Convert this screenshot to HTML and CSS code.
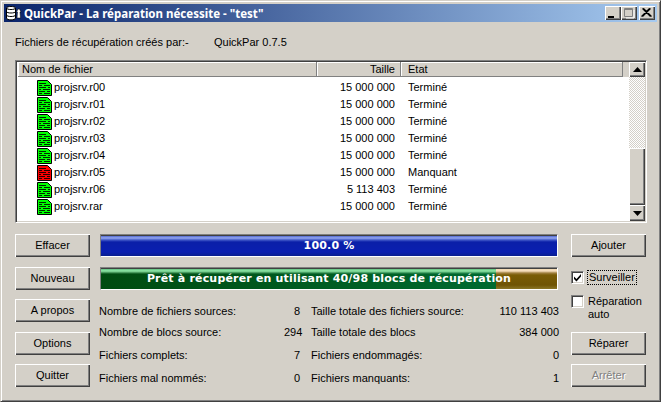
FILE: index.html
```html
<!DOCTYPE html>
<html lang="fr">
<head>
<meta charset="utf-8">
<title>QuickPar</title>
<link rel="stylesheet" href="styles.css">
</head>
<body>
<svg class="defs" width="0" height="0" aria-hidden="true">
  <symbol id="file" viewBox="0 0 16 16">
    <path d="M.5 .5H10.5L14.500 4.500V15.500H.5Z" fill="currentColor" stroke="#000"/>
    <path d="M2 3.500H9M2 5.500H5M7 5.500H13M2 7.500H9M11 7.500H13M2 9.500H4M6 9.500H13M2 11.500H8M10 11.500H13M2 13.500H5M7 13.500H13" fill="none" stroke="#000" stroke-opacity=".85"/>
  </symbol>
</svg>
<div class="window">
  <header class="titlebar">
    <svg class="appicon" width="18" height="16" viewBox="0 0 18 16">
      <path d="M1.500 3C1.500 1 10.500 1 10.500 3V13C10.500 15.500 1.500 15.500 1.500 13Z" fill="#fff" stroke="#000"/>
      <path d="M1.500 3C1.500 5 10.500 5 10.500 3M1.500 6.500C1.500 8.500 10.500 8.500 10.500 6.500M1.500 10C1.500 12 10.500 12 10.500 10" fill="none" stroke="#000"/>
      <path d="M13 4L11.500 7H12.500L12 13H15.500L15 7H16L14.500 4Z" fill="#fff" stroke="#000" stroke-width=".5"/>
    </svg>
    <span class="title">QuickPar - La réparation nécessite - "test"</span>
    <div class="caption">
      <button class="capbtn" aria-label="Réduire"><svg width="15" height="14" viewBox="0 0 15 14"><path d="M3 10H9V12H3Z" fill="#000"/></svg></button>
      <button class="capbtn" aria-label="Agrandir"><svg width="15" height="14" viewBox="0 0 15 14"><path d="M3.500 2.500H11.500V10.500H3.500Z M3 3.500H12" fill="none" stroke="#808080"/><path d="M5 12H13V4" fill="none" stroke="#fff"/></svg></button>
      <button class="capbtn close" aria-label="Fermer"><svg width="15" height="14" viewBox="0 0 15 14"><path d="M3.500 2.500L11.500 10.500M11.500 2.500L3.500 10.500M4.500 2.500L12.500 10.500M10.500 2.500L2.500 10.500" fill="none" stroke="#000" stroke-width="1.100"/></svg></button>
    </div>
  </header>
  <main class="content">
    <div class="creator"><span class="creator-label">Fichiers de récupération créés par:-</span><span>QuickPar 0.7.5</span></div>
    <section class="listbox">
      <div class="listmain">
        <div class="listhead">
          <div class="hcell hname">Nom de fichier</div>
          <div class="hcell hsize">Taille</div>
          <div class="hcell hstate">Etat</div>
        </div>
        <div class="rows">
          <div class="row"><span class="name"><svg class="ficon ok" width="16" height="16"><use href="#file"/></svg>projsrv.r00</span><span class="size">15 000 000</span><span class="state">Terminé</span></div>
          <div class="row"><span class="name"><svg class="ficon ok" width="16" height="16"><use href="#file"/></svg>projsrv.r01</span><span class="size">15 000 000</span><span class="state">Terminé</span></div>
          <div class="row"><span class="name"><svg class="ficon ok" width="16" height="16"><use href="#file"/></svg>projsrv.r02</span><span class="size">15 000 000</span><span class="state">Terminé</span></div>
          <div class="row"><span class="name"><svg class="ficon ok" width="16" height="16"><use href="#file"/></svg>projsrv.r03</span><span class="size">15 000 000</span><span class="state">Terminé</span></div>
          <div class="row"><span class="name"><svg class="ficon ok" width="16" height="16"><use href="#file"/></svg>projsrv.r04</span><span class="size">15 000 000</span><span class="state">Terminé</span></div>
          <div class="row"><span class="name"><svg class="ficon bad" width="16" height="16"><use href="#file"/></svg>projsrv.r05</span><span class="size">15 000 000</span><span class="state">Manquant</span></div>
          <div class="row"><span class="name"><svg class="ficon ok" width="16" height="16"><use href="#file"/></svg>projsrv.r06</span><span class="size">5 113 403</span><span class="state">Terminé</span></div>
          <div class="row"><span class="name"><svg class="ficon ok" width="16" height="16"><use href="#file"/></svg>projsrv.rar</span><span class="size">15 000 000</span><span class="state">Terminé</span></div>
        </div>
      </div>
      <div class="scrollbar">
        <div class="sbtn up"><svg width="9" height="5" viewBox="0 0 9 5"><path d="M4.500 0L9 5H0Z" fill="#000"/></svg></div>
        <div class="track"></div>
        <div class="thumb"></div>
        <div class="sbtn"><svg width="9" height="5" viewBox="0 0 9 5"><path d="M0 0H9L4.500 5Z" fill="#000"/></svg></div>
      </div>
    </section>
    <section class="panel">
      <button class="btn b1">Effacer</button>
      <button class="btn b2">Nouveau</button>
      <button class="btn b3">A propos</button>
      <button class="btn b4">Options</button>
      <button class="btn b5">Quitter</button>

      <div class="bar blue"><div class="barfill" style="width:100%"></div><span class="bartext">100.0 %</span></div>
      <div class="bar duo"><div class="barfill" style="width:86.6%"></div><span class="bartext">Prêt à récupérer en utilisant 40/98 blocs de récupération</span></div>

      <dl class="stats">
        <dt>Nombre de fichiers sources:</dt><dd>8</dd><dt>Taille totale des fichiers source:</dt><dd>110 113 403</dd>
        <dt>Nombre de blocs source:</dt><dd>294</dd><dt>Taille totale des blocs</dt><dd>384 000</dd>
        <dt>Fichiers complets:</dt><dd>7</dd><dt>Fichiers endommagés:</dt><dd>0</dd>
        <dt>Fichiers mal nommés:</dt><dd>0</dd><dt>Fichiers manquants:</dt><dd>1</dd>
      </dl>

      <button class="btn r1">Ajouter</button>
      <div class="check c1"><span class="box"><svg width="9" height="9" viewBox="0 0 9 9"><path d="M1 3.500L3.500 6L8 1V3.500L3.500 8.500L1 6Z" fill="#000"/></svg></span><span class="focus">Surveiller</span></div>
      <div class="check c2"><span class="box"></span><span>Réparation<br>auto</span></div>
      <button class="btn r4">Réparer</button>
      <button class="btn r5" disabled>Arrêter</button>
    </section>
  </main>
</div>
</body>
</html>
```
FILE: styles.css
```css
* { box-sizing: border-box; }
html, body { margin: 0; padding: 0; }
body {
  width: 661px;
  height: 402px;
  overflow: hidden;
  font: 11px/13px "Liberation Sans", Arial, sans-serif;
  color: #000;
  background: #d4d0c8;
}
.defs { position: absolute; }
.window {
  width: 661px;
  height: 402px;
  padding: 3px;
  border: 1px solid;
  border-color: #d4d0c8 #404040 #404040 #d4d0c8;
  box-shadow: inset 1px 1px 0 #fff, inset -1px -1px 0 #808080;
  display: flex;
  flex-direction: column;
}
.titlebar {
  flex: none;
  height: 18px;
  padding: 0 2px 0 1px;
  display: flex;
  align-items: center;
  background: linear-gradient(90deg, #0a246a, #a6caf0);
  color: #fff;
}
.appicon { flex: none; margin-right: 1px; }
.title { font: 700 11.5px/13px "Noto Sans", sans-serif; white-space: nowrap; flex: 1; }
.caption { display: flex; }
.capbtn {
  width: 16px;
  height: 14px;
  padding: 0;
  margin: 0;
  background: #d4d0c8;
  border: 0;
  box-shadow: inset 1px 1px 0 #fff, inset -1px -1px 0 #404040, inset -2px -2px 0 #808080;
  display: block;
}
.capbtn svg { display: block; }
.close { margin-left: 2px; }
.content { flex: 1; display: flex; flex-direction: column; padding: 0 10px 0 11px; }
.creator { height: 38px; padding-top: 14px; line-height: 13px; display: flex; }
.creator-label { width: 199px; }
.listbox {
  height: 163px;
  display: flex;
  border: 1px solid;
  border-color: #808080 #fff #fff #808080;
  background: #fff;
  box-shadow: inset 1px 1px 0 #404040, inset -1px -1px 0 #d4d0c8;
  padding: 1px 1px 1px 2px;
}
.listmain { flex: 1; min-width: 0; }
.listhead { height: 15px; display: flex; background: #d4d0c8; }
.hcell {
  line-height: 15px;
  padding: 0 6px 0 4px;
  box-shadow: inset -1px 0 0 #808080, inset 0 -1px 0 #808080, inset 1px 1px 0 #fff;
}
.hname { width: 299px; }
.hsize { width: 84px; text-align: right; }
.hstate { width: 222px; padding-left: 7px; }
.rows { padding-top: 2px; }
.row { height: 17px; display: flex; align-items: center; line-height: 17px; white-space: nowrap; }
.name { width: 299px; padding-left: 19px; display: flex; align-items: center; }
.ficon { flex: none; margin-right: 1px; }
.ok { color: #00ff00; }
.bad { color: #ff0000; }
.size { width: 78px; text-align: right; }
.state { padding-left: 13px; }
.scrollbar { width: 16px; flex: none; display: flex; flex-direction: column; }
.sbtn {
  height: 16px;
  background: #d4d0c8;
  box-shadow: inset 1px 1px 0 #fff, inset -1px -1px 0 #404040, inset -2px -2px 0 #808080;
  display: flex;
  align-items: center;
  justify-content: center;
}
.up { height: 15px; }
.track {
  height: 71px;
  background: repeating-conic-gradient(#fff 0 25%, #d4d0c8 0 50%) 0 0 / 2px 2px;
}
.thumb {
  height: 57px;
  background: #d4d0c8;
  box-shadow: inset 1px 1px 0 #fff, inset -1px -1px 0 #404040, inset -2px -2px 0 #808080;
}
.panel {
  margin-top: 11px;
  display: grid;
  grid-template-columns: 75px 10px 458px 13px 75px;
  grid-template-rows: 33px 32px 33px 32px 23px;
}
.btn {
  height: 23px;
  padding: 0;
  font: inherit;
  color: #000;
  background: #d4d0c8;
  border: 0;
  box-shadow: inset 1px 1px 0 #fff, inset -1px -1px 0 #404040, inset -2px -2px 0 #808080;
}
.btn:disabled { color: #808080; text-shadow: 1px 1px 0 #fff; }
.b1 { grid-area: 1 / 1; }
.b2 { grid-area: 2 / 1; }
.b3 { grid-area: 3 / 1; }
.b4 { grid-area: 4 / 1; }
.b5 { grid-area: 5 / 1; }
.r1 { grid-area: 1 / 5; }
.r4 { grid-area: 4 / 5; }
.r5 { grid-area: 5 / 5; }
.c1 { grid-area: 2 / 5; margin-top: 4px; }
.c2 { grid-area: 3 / 5; margin-top: -4px; align-items: center; align-self: start; }
.bar {
  height: 23px;
  position: relative;
  border: 1px solid;
  border-color: #808080 #fff #fff #808080;
  box-shadow: inset 1px 1px 0 #404040;
  overflow: hidden;
  background-image: linear-gradient(#404040 0, #404040 1px, #f0d8b0 1px, #f8e0c0 3px, #a08040 5px, #7a5c05 7px, #6f5404 17px, #8a7526 100%);
}
.blue { grid-area: 1 / 3; }
.duo { grid-area: 2 / 3; }
.barfill { height: 100%; }
.blue .barfill { background: linear-gradient(#404040 0, #404040 1px, #5068d0 1px, #95a8f0 3px, #4058c8 5px, #0a1fa8 7px, #0a1fb0 17px, #0a1f90 100%); }
.duo .barfill {
  background:
    linear-gradient(#404040 0, #404040 1px, #60c080 1px, #90e8a8 3px, rgba(0, 112, 48, 0) 6px),
    linear-gradient(90deg, #004b10, #006a30);
}
.bartext {
  position: absolute;
  top: 0;
  left: 0;
  right: 0;
  text-align: center;
  color: #fff;
  font: 700 11px/22px "DejaVu Sans", sans-serif;
  letter-spacing: .18px;
  white-space: nowrap;
}
.stats {
  grid-area: 3 / 3 / 6 / 4;
  margin: 2px 0 0 -1px;
  display: grid;
  grid-template-columns: 185px 16px 188px 71px;
  grid-template-rows: 21px 21px 25px 21px;
  align-items: center;
}
.stats dt, .stats dd { margin: 0; white-space: nowrap; }
.stats dd { text-align: right; }
.stats dt:nth-child(4n+3) { margin-left: 11px; }
.check { display: flex; align-items: flex-start; gap: 4px; }
.box {
  flex: none;
  width: 13px;
  height: 13px;
  background: #fff;
  border: 1px solid;
  border-color: #808080 #fff #fff #808080;
  box-shadow: inset 1px 1px 0 #404040, inset -1px -1px 0 #d4d0c8;
  display: flex;
  align-items: center;
  justify-content: center;
}
.box svg { display: block; }
.focus { outline: 1px dotted #000; padding: 0 1px; }
```
